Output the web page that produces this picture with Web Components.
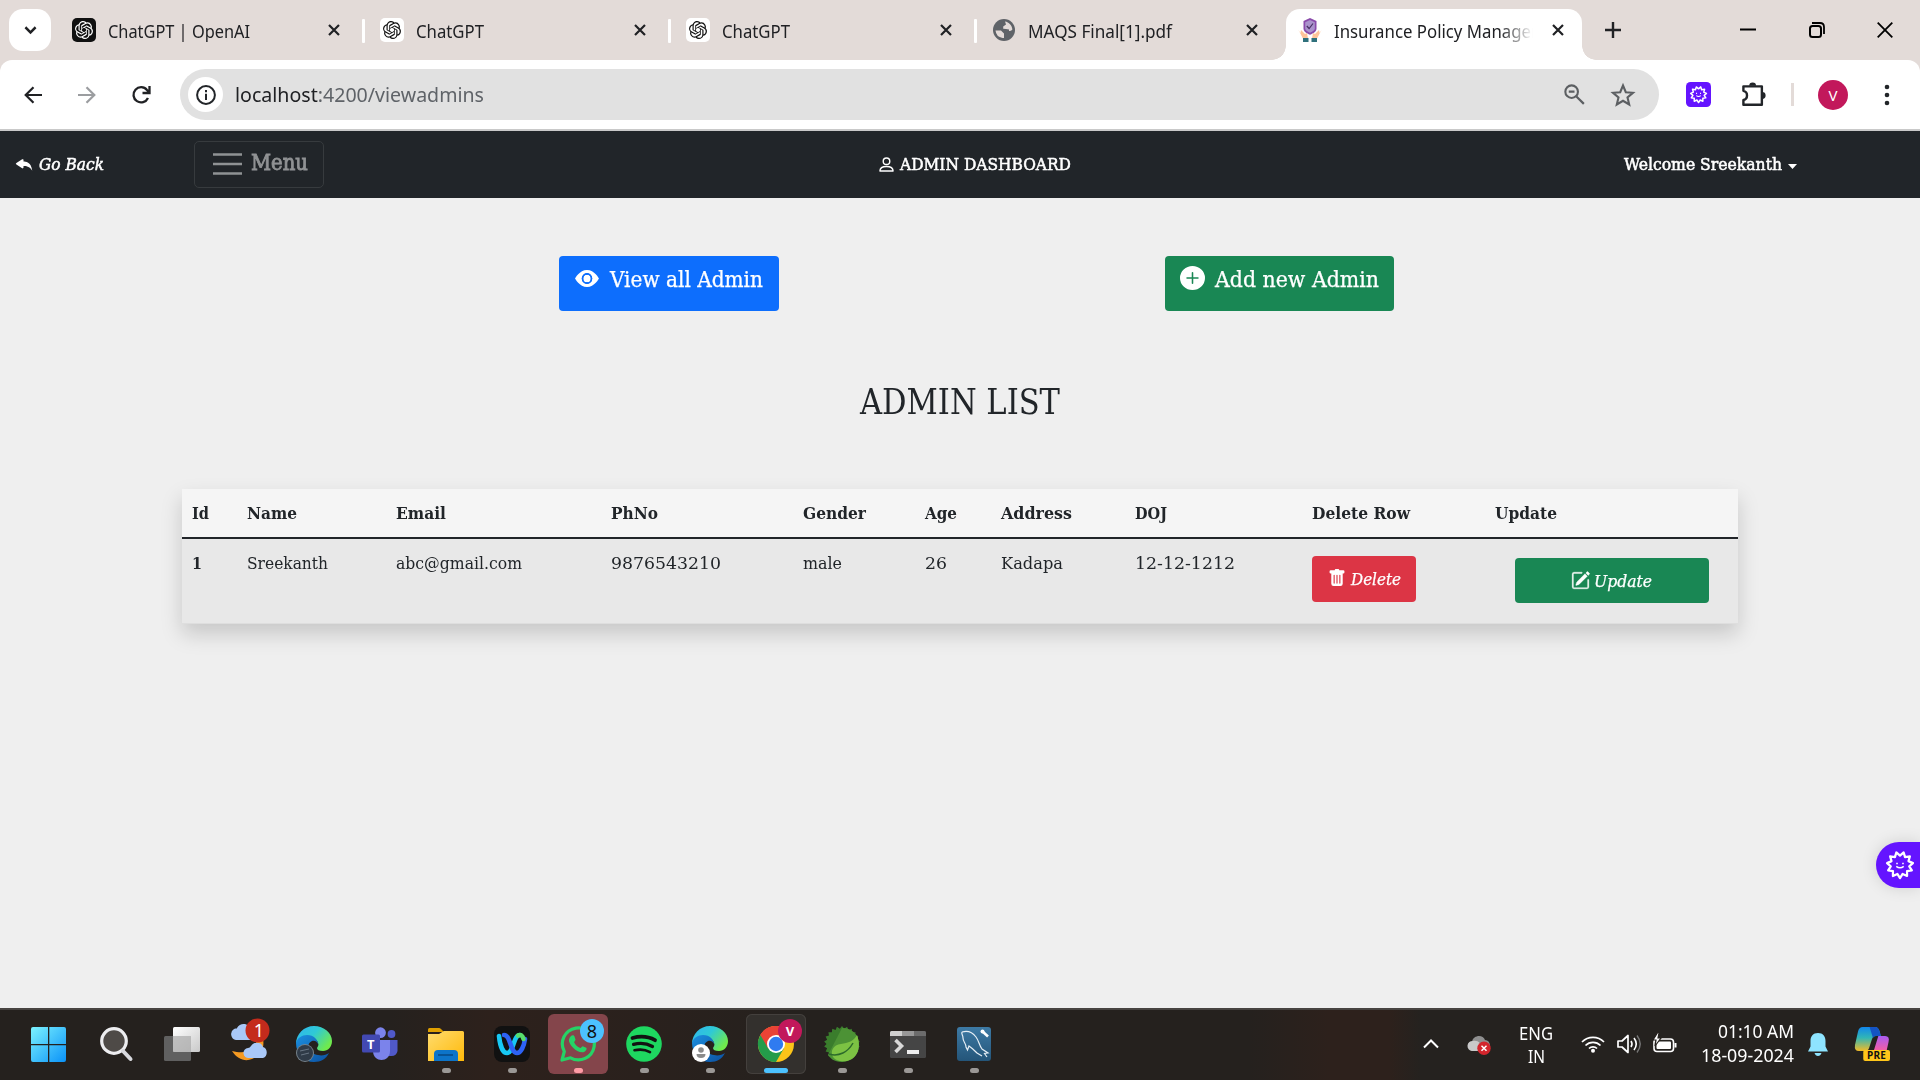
<!DOCTYPE html>
<html lang="en">
<head>
<meta charset="utf-8">
<title>Insurance Policy Management</title>
<style>
html,body{margin:0;height:100%;overflow:hidden}
body{width:1920px;height:1080px;background:#efefef}
</style>
</head>
<body>
<desktop-screen></desktop-screen>
<script>
const star = (cx, cy, ro, ri, n) => {
  let d = '';
  for (let i = 0; i < n * 2; i++) {
    const r = i % 2 ? ri : ro, a = Math.PI * (i / n + 0.5);
    d += (i ? 'L' : 'M') + (cx + r * Math.cos(a)).toFixed(2) + ' ' + (cy + r * Math.sin(a)).toFixed(2);
  }
  return d + 'Z';
};
const OPENAI = 'M22.2819 9.8211a5.9847 5.9847 0 0 0-.5157-4.9108 6.0462 6.0462 0 0 0-6.5098-2.9A6.0651 6.0651 0 0 0 4.9807 4.1818a5.9847 5.9847 0 0 0-3.9977 2.9 6.0462 6.0462 0 0 0 .7427 7.0966 5.98 5.98 0 0 0 .511 4.9107 6.051 6.051 0 0 0 6.5146 2.9001A5.9847 5.9847 0 0 0 13.2599 24a6.0557 6.0557 0 0 0 5.7718-4.2058 5.9894 5.9894 0 0 0 3.9977-2.9001 6.0557 6.0557 0 0 0-.7475-7.0729zm-9.022 12.6081a4.4755 4.4755 0 0 1-2.8764-1.0408l.1419-.0804 4.7783-2.7582a.7948.7948 0 0 0 .3927-.6813v-6.7369l2.02 1.1686a.071.071 0 0 1 .038.052v5.5826a4.504 4.504 0 0 1-4.4945 4.4944zm-9.6607-4.1254a4.4708 4.4708 0 0 1-.5346-3.0137l.142.0852 4.783 2.7582a.7712.7712 0 0 0 .7806 0l5.8428-3.3685v2.3324a.0804.0804 0 0 1-.0332.0615L9.74 19.9502a4.4992 4.4992 0 0 1-6.1408-1.6464zM2.3408 7.8956a4.485 4.485 0 0 1 2.3655-1.9728V11.6a.7664.7664 0 0 0 .3879.6765l5.8144 3.3543-2.0201 1.1685a.0757.0757 0 0 1-.071 0l-4.8303-2.7865A4.504 4.504 0 0 1 2.3408 7.872zm16.5963 3.8558L13.1038 8.364 15.1192 7.2a.0757.0757 0 0 1 .071 0l4.8303 2.7913a4.4944 4.4944 0 0 1-.6765 8.1042v-5.6772a.79.79 0 0 0-.407-.667zm2.0107-3.0231l-.142-.0852-4.7735-2.7818a.7759.7759 0 0 0-.7854 0L9.409 9.2297V6.8974a.0662.0662 0 0 1 .0284-.0615l4.8303-2.7866a4.4992 4.4992 0 0 1 6.6802 4.66zM8.3065 12.863l-2.02-1.1638a.0804.0804 0 0 1-.038-.0567V6.0742a4.4992 4.4992 0 0 1 7.3757-3.4537l-.142.0805L8.704 5.459a.7948.7948 0 0 0-.3927.6813zm1.0976-2.3654l2.602-1.4998 2.6069 1.4998v2.9994l-2.5974 1.4997-2.6067-1.4997Z';
const GEAR = star(15, 15, 14, 10, 11);
const EDGE = `<defs><linearGradient id="a" x1="0" y1="0" x2="1" y2=".6"><stop offset="0" stop-color="#2fb4f0"/><stop offset=".5" stop-color="#2fc9d6"/><stop offset="1" stop-color="#70ea4c"/></linearGradient><linearGradient id="b" x1="0" y1="0" x2="1" y2="1"><stop offset="0" stop-color="#1b8fe0"/><stop offset="1" stop-color="#0c50a0"/></linearGradient></defs>
<path d="M0 18C0 8 8 0 18 0s18 7 18 15c0 6-4 10-9 10-4 0-6-1-6-3 1-2 2-3 1-5-1-4-5-6-9-6C7 11 2 14 0 18z" fill="url(#a)"/><path d="M0 17c1-5 6-8 11-8 7 0 11 5 11 9-1-3-4-4-6-3-7 3-3 13 6 14 4 1 8 0 11-2-3 6-8 9-15 9C8 36 0 28 0 17z" fill="url(#b)"/>`;
const ICONS = {
  chevron: ['0 0 14 8', '<path d="M1.5 1.3 7 6.5l5.500-5.200" stroke="currentColor" stroke-width="2.600" fill="none"/>'],
  close: ['0 0 12 12', '<path d="M1 1l10 10M11 1 1 11" stroke="currentColor" stroke-width="2.200"/>'],
  plus: ['0 0 16 16', '<path d="M8 0v16M0 8h16" stroke="currentColor" stroke-width="2.400"/>'],
  min: ['0 0 16 16', '<path d="M0 7.500h16" stroke="#000" stroke-width="2"/>'],
  restore: ['0 0 16 16', '<path d="M3 1h8q4 0 4 4v7" stroke="#000" stroke-width="1.800" fill="none"/><rect x="1" y="4" width="11" height="11" rx="2.500" fill="none" stroke="#000" stroke-width="2"/>'],
  winclose: ['0 0 16 16', '<path d="M.7.7l14.600 14.600M15.300.7.7 15.300" stroke="#000" stroke-width="1.800"/>'],
  openaiDark: ['0 0 24 24', `<rect width="24" height="24" rx="5" fill="#101010"/><path transform="translate(3 3) scale(.75)" d="${OPENAI}" fill="#fff"/>`],
  openai: ['0 0 24 24', `<rect width="24" height="24" rx="5" fill="#fff"/><path transform="translate(3 3) scale(.75)" d="${OPENAI}" fill="#111"/>`],
  globe: ['0 0 22 22', '<circle cx="11" cy="11" r="11" fill="#5f6368"/><path d="M2.500 11.500h5.500l3 3v4.500h-1.500A8.500 8.500 0 0 1 2.500 11.500zM12 2.600c4 .6 7 4 7.400 7.900-.8 1.500-2.400 1.500-3.400 1.500v-1.500l-3-.5-2.800-.3V7.500l2.800-2z" fill="#e3dbd8"/>'],
  insurance: ['0 0 24 24', '<path d="M12 0l6.500 3v7.500c0 3-3 4.700-6.500 6.300-3.500-1.600-6.500-3.300-6.500-6.300V3z" fill="#8a4bab"/><path d="M12 2l4.800 2.200v6c0 2-2 3.300-4.800 4.600-2.800-1.300-4.800-2.600-4.800-4.600v-6z" fill="#aa93cc"/><path d="M8.800 8l2.300 2.500L15 5.500" fill="none" stroke="#473064" stroke-width="1.200"/><path d="M.2 11.500 2.500 15l.5-3 4 4 2-1 1 5.500H5zM23.800 11.500 21.500 15l-.5-3-4 4-2-1-1 5.500h5z" fill="#ffc49a"/><path d="M5 20h5.500v4H5zM13.500 20H19v4h-5.500z" fill="#2f717c"/>'],
  back: ['0 0 18 18', '<path d="M9.500 1.200 1.700 9l7.800 7.800M1.700 9H18" fill="none" stroke="currentColor" stroke-width="2.200"/>'],
  reload: ['0 0 20 20', '<path d="M17 13a7.600 7.600 0 1 1-1-8l2 2.300M18.500 1v7h-7" fill="none" stroke="currentColor" stroke-width="2.300"/>'],
  info: ['0 0 20 20', '<circle cx="10" cy="10" r="8.900" fill="none" stroke="#222529" stroke-width="2"/><path d="M9 8.800h2V15H9zM9 5h2v2.200H9z" fill="#222529"/>'],
  zoomout: ['0 0 22 22', '<circle cx="8" cy="8" r="6.600" fill="none" stroke="#5c5f62" stroke-width="2.200"/><path d="M5 8h6M13 13l7.800 7.800" stroke="#5c5f62" stroke-width="2.300"/>'],
  star: ['0 0 24 24', '<path d="M12 2.500l2.800 6.700 7.200.6-5.500 4.700 1.700 7L12 17.800l-6.200 3.700 1.700-7L2 9.800l7.200-.6z" fill="none" stroke="#5c5f62" stroke-width="2.100"/>'],
  ext: ['0 0 25 25', `<rect width="25" height="25" rx="4.500" fill="#6414ff"/><g transform="translate(4 4) scale(.57)"><path d="${GEAR}" fill="none" stroke="#fff" stroke-width="2.600" stroke-linejoin="round"/><path d="M11.500 12v2m7-2v2m-7.500 3q4 3 8 0" fill="none" stroke="#fff" stroke-width="1.800"/></g>`],
  puzzle: ['0 0 26 26', '<path d="M2.500 4.500h19.200v19.200H2.500v-5c5-1 5-8.500 0-9.500z" fill="none" stroke="#222529" stroke-width="2.500" stroke-linejoin="round"/><path d="M8.500 4a3.600 3.600 0 0 1 7.200 0zM22 10.500a3.600 3.600 0 0 1 0 7.200z" fill="#222529"/>'],
  dots: ['0 0 6 22', '<circle cx="3" cy="3" r="2.300" fill="#222529"/><circle cx="3" cy="11" r="2.300" fill="#222529"/><circle cx="3" cy="19" r="2.300" fill="#222529"/>'],
  reply: ['0 2.300 16 11', '<path d="M5.921 11.900 1.353 8.620a.719.719 0 0 1 0-1.238L5.921 4.100A.716.716 0 0 1 7 4.719V6c1.500 0 6 0 7 8-2.500-4.500-7-4-7-4v1.281c0 .56-.606.898-1.079.62z" fill="#fff" transform="translate(-1.200 -1.700) scale(1.180 1.050)"/>'],
  burger: ['0 0 28 24', '<path d="M0 2.500h28M0 12h28M0 21.500h28" stroke="#8f9294" stroke-width="2.400"/>'],
  person: ['0 0 16 16', '<circle cx="8" cy="4.500" r="3.500" fill="none" stroke="#fff" stroke-width="1.500"/><path d="M1 15c0-3 3-4.800 7-4.800s7 1.800 7 4.800z" fill="none" stroke="#fff" stroke-width="1.500" stroke-linejoin="round"/>'],
  caret: ['0 0 10 5', '<path d="M0 0h10L5 5z" fill="#fff"/>'],
  eye: ['0 2.500 16 11', '<path d="M10.500 8a2.500 2.500 0 1 1-5 0 2.500 2.500 0 0 1 5 0z" fill="#fff"/><path d="M0 8s3-5.500 8-5.500S16 8 16 8s-3 5.500-8 5.500S0 8 0 8zm8 3.500a3.500 3.500 0 1 0 0-7 3.500 3.500 0 0 0 0 7z" fill="#fff" fill-rule="evenodd"/><circle cx="8" cy="8" r="3" fill="none" stroke="#0d6efd" stroke-width="1"/>'],
  pluscircle: ['0 0 16 16', '<path d="M16 8A8 8 0 1 1 0 8a8 8 0 0 1 16 0zM8.500 4.500a.5.5 0 0 0-1 0v3h-3a.5.5 0 0 0 0 1h3v3a.5.5 0 0 0 1 0v-3h3a.5.5 0 0 0 0-1h-3v-3z" fill="#fff"/>'],
  trash: ['1 0 14 16', '<path d="M2.500 1a1 1 0 0 0-1 1v1a1 1 0 0 0 1 1H3v9a2 2 0 0 0 2 2h6a2 2 0 0 0 2-2V4h.5a1 1 0 0 0 1-1V2a1 1 0 0 0-1-1H10a1 1 0 0 0-1-1H7a1 1 0 0 0-1 1H2.500zm3 4a.5.5 0 0 1 .5.5v7a.5.5 0 0 1-1 0v-7a.5.5 0 0 1 .5-.5zM8 5a.5.5 0 0 1 .5.5v7a.5.5 0 0 1-1 0v-7A.5.5 0 0 1 8 5zm3 .5v7a.5.5 0 0 1-1 0v-7a.5.5 0 0 1 1 0z" fill="#fff"/>'],
  pencil: ['0 0 16 16', '<path d="M15.502 1.940a.5.5 0 0 1 0 .706L14.459 3.690l-2-2L13.502.646a.5.5 0 0 1 .707 0l1.293 1.293zm-1.750 2.456-2-2L4.939 9.210a.5.5 0 0 0-.121.196l-.805 2.414a.25.25 0 0 0 .316.316l2.414-.805a.5.5 0 0 0 .196-.12l6.813-6.814z" fill="#fff" stroke="#fff" stroke-width=".3"/><path d="M1 13.500A1.500 1.500 0 0 0 2.500 15h11a1.500 1.500 0 0 0 1.500-1.500v-6a.5.5 0 0 0-1 0v6a.5.5 0 0 1-.5.5h-11a.5.5 0 0 1-.5-.5v-11a.5.5 0 0 1 .5-.5H9a.5.5 0 0 0 0-1H2.500A1.500 1.500 0 0 0 1 2.500v11z" fill="#fff" stroke="#fff" stroke-width=".3"/>'],
  gear: ['0 0 30 30', `<path d="${GEAR}" fill="none" stroke="#fff" stroke-width="2.400" stroke-linejoin="round"/><path d="M11.800 12.500v1.600m6.400-1.600v1.600m-7.200 2.400q4 3 8 0" fill="none" stroke="#fff" stroke-width="1.700"/>`],
  windows: ['0 0 35 35', '<defs><linearGradient id="w" gradientUnits="userSpaceOnUse" x1="0" y1="0" x2="35" y2="35"><stop offset="0" stop-color="#7cf3ff"/><stop offset="1" stop-color="#0a92f8"/></linearGradient></defs><path d="M2 0h15v17H0V2q0-2 2-2zM18.300 0H33q2 0 2 2v15H18.300zM0 18.300h17V35H2q-2 0-2-2zM18.300 18.300H35V33q0 2-2 2H18.300z" fill="url(#w)"/>'],
  search: ['0 0 33 35', '<circle cx="14" cy="14" r="12.300" fill="#4e4a47" stroke="#ededf0" stroke-width="3.200"/><path d="M23 24l7.500 8" stroke="#d8d9de" stroke-width="4" stroke-linecap="round"/>'],
  taskview: ['0 0 36 34', '<defs><linearGradient id="t" x1="0" y1="0" x2="1" y2="1"><stop offset="0" stop-color="#fff"/><stop offset="1" stop-color="#c9c9c9"/></linearGradient></defs><rect y="9" width="27" height="25" rx="1.500" fill="#606060"/><rect x="9" width="27" height="25" rx="1.500" fill="url(#t)"/><path d="M9 9h18v16H9z" fill="#aaa" opacity=".7"/>'],
  weather: ['0 0 42 44', '<path d="M27 21c2 9-9 15-24 11 5 8 13 11 20 8 8-3 13-10 11-20z" fill="#f59a22"/><path d="M7 21a6 6 0 0 1-2-11c2-1 3 0 3-1 3-6 12-5 13 1 6 1 7 10 1 11zM20 39a5 5 0 0 1-1-10c3-1 2-1 3-2 3-5 11-4 12 1 5 1 5 10 0 11z" fill="#a9c8f8"/><circle cx="28.500" cy="11.500" r="12" fill="#c42b1c"/>', '1'],
  edge: ['0 0 36 36', EDGE + '<circle cx="9" cy="27" r="9" fill="#75818b"/><circle cx="9" cy="27" r="8" fill="#303b48"/><path d="M4 25l9-2M5 29l8-2" stroke="#697684" stroke-width="1"/>'],
  edge2: ['0 0 36 36', EDGE + '<circle cx="9" cy="27" r="9" fill="#fff"/><circle cx="9" cy="24" r="2.800" fill="#8b8b8b"/><path d="M4.500 28h9q0 4-4.500 4t-4.500-4z" fill="#8b8b8b"/>'],
  teams: ['0 0 36 34', '<circle cx="29.500" cy="7" r="3.900" fill="#5059c9"/><path d="M26 13h9.500v11q-1 5-6 5h-4z" fill="#5059c9"/><circle cx="18.500" cy="5.700" r="5.400" fill="#7b83eb"/><path d="M11 13h17v11c0 12-17 12-17 0z" fill="#7b83eb"/><rect y="7.500" width="18" height="18" rx="1.500" fill="#4249b2"/>'],
  folder: ['0 0 36 33', '<defs><linearGradient id="f" x1="0" y1="0" x2="1" y2="1"><stop offset="0" stop-color="#ffdc6e"/><stop offset="1" stop-color="#ffb90a"/></linearGradient></defs><path d="M0 1.500Q0 0 1.500 0H11q1 0 2 1l3 3H0z" fill="#e0a000"/><path d="M0 6h11l5-3h18.500Q36 3 36 4.500V33H0z" fill="url(#f)"/><path d="M6 33v-7q0-4 4-4h16q4 0 4 4v7z" fill="#0d74c9"/><path d="M10 27h15" stroke="#084b88" stroke-width="1.600"/>'],
  webex: ['0 0 36 36', '<rect width="36" height="36" rx="8" fill="#111"/><path d="M5 10c1 10 4 17 8 17 7 0 6-18 13-18" fill="none" stroke="#17c8f4" stroke-width="4.600" stroke-linecap="round"/><path d="M10 9c7 0 6 18 13 18 4 0 7-7 8-14" fill="none" stroke="#2d62f5" stroke-width="4.600" stroke-linecap="round"/><path d="M24 9.500q4-2 5.500 3.500" fill="none" stroke="#57dd6b" stroke-width="4.600" stroke-linecap="round"/>'],
  whatsapp: ['0 0 36 36', '<path d="M2 34l2.300-8.500A16 16 0 1 1 10.500 31.800z" fill="none" stroke="#25d366" stroke-width="3.200" stroke-linejoin="round"/><path d="M11 10c1-1 3-1 3.500.5l1 3c.2 1-1.500 2-1.300 3 1.300 2.800 3 4.300 6 5.500 1 .3 2-2 3-1.600l3 1.400c1 .5 0 3.700-2.700 4.400C17 27.500 8 18 9 13.500q.5-2.500 2-3.500z" fill="#25d366"/>'],
  spotify: ['0 0 36 36', '<circle cx="18" cy="18" r="17.800" fill="#1ed760"/><path d="M6.500 12c8-2.200 16-1.500 22.500 2.200" stroke="#121212" stroke-width="3.800" fill="none" stroke-linecap="round"/><path d="M7.500 18.400c7-1.900 13.500-1 19 2.100" stroke="#121212" stroke-width="3.200" fill="none" stroke-linecap="round"/><path d="M8.500 24.300c6-1.400 11-.7 15.500 1.900" stroke="#121212" stroke-width="2.600" fill="none" stroke-linecap="round"/>'],
  chrome: ['0 0 36 36', '<circle cx="18" cy="18" r="18" fill="#fcc419"/><path d="M18 18 2.400 9A18 18 0 0 1 33.600 9H18z" fill="#ea4335"/><path d="M2.400 9A18 18 0 0 0 18 36l7.800-13.500L18 18z" fill="#249c4a"/><path d="M2.400 9 10.200 22.500 18 18V9h15.600A18 18 0 0 0 2.400 9z" fill="#ea4335"/><circle cx="18" cy="18" r="9" fill="#fff"/><circle cx="18" cy="18" r="7.200" fill="#2f7bf0"/>'],
  spring: ['0 0 36 36', `<path d="${star(18, 18, 18, 15.5, 22)}" fill="#3a7d2c"/><path d="M18 2a16 16 0 0 1 17 16 17 17 0 0 1-17 18C10 36 6 32 4 29z" fill="#4c9235"/><path d="M33 9c4 11 2 23-10 26-6 1-11 0-14-4-3-6 0-12 8-13 7-1 13-3 16-9z" fill="#7cc243"/><path d="M5 28c10 3 19-2 24-11" fill="none" stroke="#2c6b2b" stroke-width="1.500"/>`],
  terminal: ['0 0 36 27', '<rect width="36" height="27" rx="1.500" fill="#454545"/><path d="M0 1.500Q0 0 1.500 0H12v5H0z" fill="#d0d0d0"/><path d="M12 0h12v5H12z" fill="#989898"/><path d="M24 0h10.500Q36 0 36 1.500V5H24z" fill="#6c6c6c"/><path d="M5.500 9l6 6-6 6" fill="none" stroke="#d9d9d9" stroke-width="3.600"/><path d="M17 19h12v4H17z" fill="#eee"/>'],
  mysql: ['0 0 34 34', '<defs><linearGradient id="m" x1="0" y1="0" x2="0" y2="1"><stop offset="0" stop-color="#3d7aa5"/><stop offset="1" stop-color="#245579"/></linearGradient></defs><rect width="34" height="34" rx="3" fill="url(#m)"/><path d="M5 5c6-2 11 1 14 5 3 4 3 8 6 12l6 4-3.500.5L30 30M5 5c-1 2 1 3 1 6 0 4 3 5 3 9l1.500 3 1.500-4c3 2 5 4 8 7l5 3" fill="none" stroke="#e5eef5" stroke-width="1.200"/><path d="M25 4l6 5.500" stroke="#fff" stroke-width="2.600"/><circle cx="25.500" cy="4.500" r="2" fill="#fff"/>'],
  up: ['0 0 16 10', '<path d="M1 8.500 8 1.500l7 7" fill="none" stroke="#fff" stroke-width="2"/>'],
  cloudx: ['0 0 24 20', '<path d="M5 16a5 5 0 0 1 0-9c1-7 11-8 13-2 6 0 7 10 1 11z" fill="#8f8f8f"/><path d="M5 16a5 5 0 1 1 1-10c5-1 8 2 11 10z" fill="#c9c9c9"/><circle cx="17" cy="13.300" r="6.700" fill="#d3252c"/><path d="M14.500 10.800l5 5m0-5-5 5" stroke="#fff" stroke-width="1.500"/>'],
  wifi: ['0 0 24 18', '<path d="M1 7a15.500 15.500 0 0 1 22 0M4.500 10.500a10.500 10.500 0 0 1 15 0M8 13.500a5.700 5.700 0 0 1 8 0" fill="none" stroke="#fff" stroke-width="1.700"/><circle cx="12" cy="15.700" r="2" fill="#fff"/>'],
  volume: ['0 0 24 20', '<path d="M1 7h4l6-5.500v17L5 13H1z" fill="none" stroke="#fff" stroke-width="1.700" stroke-linejoin="round"/><path d="M14 7q2 3 0 6M17 4q4.500 6 0 12" fill="none" stroke="#fff" stroke-width="1.600"/><path d="M20 1.500q6.500 8.500 0 17" fill="none" stroke="#777" stroke-width="1.400"/>'],
  battery: ['0 0 24 20', '<rect x="1" y="6" width="19.500" height="12.500" rx="3" fill="none" stroke="#fff" stroke-width="1.600"/><rect x="3.500" y="8.500" width="14.500" height="7.500" rx="1" fill="#fff"/><path d="M21.500 10h2v4.500h-2z" fill="#fff"/><path d="M5-1 0 7h3l-1 6 6-8H5l1-5z" fill="#fff" stroke="#25211d" stroke-width="1.200"/>'],
  bell: ['0 0 20 23', '<path d="M10 0c5 0 7.500 3.500 7.500 8v5.500l2.500 5H0l2.500-5V8C2.500 3.500 5 0 10 0zM6.500 20h7q-1 3-3.500 3t-3.500-3z" fill="#8ee4ff"/>'],
  copilot: ['0 0 36 34', '<defs><linearGradient id="c" x1="0" y1="0" x2="0" y2="1"><stop offset="0" stop-color="#1287ec"/><stop offset=".45" stop-color="#31b6b5"/><stop offset="1" stop-color="#f3bb26"/></linearGradient><linearGradient id="d" x1="0" y1="0" x2="0" y2="1"><stop offset="0" stop-color="#a95cf3"/><stop offset=".6" stop-color="#ee5eaa"/><stop offset="1" stop-color="#f79a54"/></linearGradient></defs><path d="M8 0h13q3 0 4.500 5l1 4h-5q-3 0-4 3l-3 9q-1 3-4 3H4q-5 0-4-6L3 5q1-5 5-5z" fill="url(#c)"/><path d="M15 0h6q3 0 4.500 5l1 4h-5q-2 0-3 2z" fill="#1554c4"/><path d="M24 9h7q5 0 3.500 6L32 26q-1 5-5 5H17z" fill="url(#d)"/><rect x="8.500" y="23" width="27.500" height="11" rx="2" fill="#ffc61a"/>']
};

const define = (name, css, html, after) => customElements.define(name, class extends HTMLElement {
  constructor() {
    super();
    this.attachShadow({ mode: 'open' }).innerHTML = `<style>${css}</style>${html}`;
  }
  connectedCallback() { if (after) after.call(this, this.shadowRoot); }
});

/* Text set to a given advance width */
define('fit-text', ':host{display:block;flex:none;white-space:nowrap}span{display:inline-block;transform-origin:0 50%}', '<span><slot></slot></span>', function (root) {
  const w = +this.getAttribute('w'), s = root.querySelector('span');
  this.style.width = w + 'px';
  const n = s.getBoundingClientRect().width;
  if (n) s.style.transform = `scaleX(${w / n})`;
});
/* Icon: name, width, height */
define('ui-icon', ':host{display:block;flex:none}svg{display:block;width:100%;height:100%;overflow:visible}', '<svg preserveAspectRatio="none"></svg>', function (root) {
  const [vb, body] = ICONS[this.getAttribute('name')], s = root.querySelector('svg');
  s.setAttribute('viewBox', vb); s.innerHTML = body;
  this.style.width = this.getAttribute('w') + 'px';
  this.style.height = this.getAttribute('h') + 'px';
});
define('browser-tab', `
:host{display:grid;grid-template-columns:24px 12px 199px var(--gap,19px) 12px;align-items:center;height:60px;width:292px;flex:none;color:#202124;font:18.500px/24px "Noto Sans","Open Sans",sans-serif;padding-left:12px;box-sizing:border-box}
.c{grid-column:5}
:host([active]){background:#fff;height:51px;margin-top:9px;border-radius:14px 14px 0 0;width:296px;padding-bottom:9px;position:relative}
:host([active]) .m{-webkit-mask:linear-gradient(90deg,#000 83%,transparent 100%);overflow:hidden}
:host([active])::before,:host([active])::after{content:"";position:absolute;bottom:0;width:14px;height:14px}
:host([active])::before{left:-14px;background:radial-gradient(circle at 0 0,transparent 13.500px,#fff 14px)}
:host([active])::after{right:-14px;background:radial-gradient(circle at 100% 0,transparent 13.500px,#fff 14px)}
.m{grid-column:3;padding-top:1px}`,
'<slot name="icon"></slot><div class="m"><slot></slot></div><ui-icon class="c" name="close" w="12" h="12"></ui-icon>');
define('tab-strip', `
:host{display:flex;height:60px;background:#e3dbd8;color:#202124}
.d{width:42px;height:42px;border-radius:14px;background:#fff;margin:9px 9px 0;display:grid;place-items:center}
.s{width:3px;height:24px;background:#fff;margin:19px 3px 0 8px;border-radius:1px;flex:none}
.w{display:flex;align-items:center}`,
`<div class="d"><ui-icon name="chevron" w="13" h="8"></ui-icon></div>
<browser-tab style="width:294px;--gap:21px"><ui-icon slot="icon" name="openaiDark" w="24" h="24"></ui-icon><fit-text w="142">ChatGPT | OpenAI</fit-text></browser-tab>
<div class="s"></div><browser-tab><ui-icon slot="icon" name="openai" w="24" h="24"></ui-icon><fit-text w="68">ChatGPT</fit-text></browser-tab>
<div class="s"></div><browser-tab><ui-icon slot="icon" name="openai" w="24" h="24"></ui-icon><fit-text w="68">ChatGPT</fit-text></browser-tab>
<div class="s"></div><browser-tab><ui-icon slot="icon" name="globe" w="22" h="22" style="margin-left:1px"></ui-icon><fit-text w="144">MAQS Final[1].pdf</fit-text></browser-tab>
<browser-tab active style="margin-left:14px"><ui-icon slot="icon" name="insurance" w="24" h="24"></ui-icon><fit-text w="204">Insurance Policy Manager</fit-text></browser-tab>
<div class="w"><ui-icon name="plus" w="16" h="16" style="margin-left:23px"></ui-icon><ui-icon name="min" w="16" h="16" style="margin-left:119px"></ui-icon><ui-icon name="restore" w="16" h="16" style="margin-left:53px"></ui-icon><ui-icon name="winclose" w="16" h="16" style="margin-left:52px"></ui-icon></div>`);
define('tool-bar', `
:host{display:block;background:#e3dbd8;border-bottom:2px solid #c9c9c9}
.r{display:flex;align-items:center;height:69px;background:#fff;border-radius:12px 12px 0 0;color:#202124}
.o{display:flex;align-items:center;width:1479px;height:51px;border-radius:26px;background:#e1e1e1;margin-left:29px;font:20.500px/28px "Noto Sans","Open Sans",sans-serif}
.o fit-text{margin-top:-2px}
.i{width:35px;height:35px;border-radius:50%;background:#fff;margin:0 12px 0 8px;display:grid;place-items:center}
.o span{color:#5f6368}
.v{width:30px;height:30px;border-radius:50%;background:#c2185b;color:#fff;font:15px/30px "Noto Sans",sans-serif;text-align:center;margin-left:24px}`,
`<div class="r"><ui-icon name="back" w="18" h="18" style="margin-left:24px"></ui-icon><ui-icon name="back" w="18" h="18" style="margin-left:36px;transform:scaleX(-1);color:#9b9da0"></ui-icon><ui-icon name="reload" w="20" h="20" style="margin-left:35px"></ui-icon>
<div class="o"><div class="i"><ui-icon name="info" w="20" h="20"></ui-icon></div><fit-text w="249">localhost<span>:4200/viewadmins</span></fit-text><ui-icon name="zoomout" w="21" h="21" style="margin-left:1080px"></ui-icon><ui-icon name="star" w="24" h="24" style="margin-left:26px"></ui-icon></div>
<ui-icon name="ext" w="25" h="25" style="margin-left:27px"></ui-icon><ui-icon name="puzzle" w="25" h="25" style="margin-left:30px"></ui-icon><div style="width:3px;height:23px;background:#e3dbd8;margin-left:25px"></div><div class="v">V</div><ui-icon name="dots" w="6" h="22" style="margin-left:36px"></ui-icon></div>`);
define('nav-bar', `
:host{display:flex;align-items:center;height:67px;background:#212529;color:#fff;font:17px/24px "DejaVu Serif Condensed","DejaVu Serif",serif}
fit-text{-webkit-text-stroke:.5px currentColor;margin-top:-1px}
.m{display:flex;align-items:center;box-sizing:border-box;width:130px;height:47px;border:1px solid #373b3e;border-radius:5px;margin:-1px 0 0 90px;padding-left:18px;color:#909294;font-size:21.500px}.m fit-text{-webkit-text-stroke:.8px currentColor}`,
`<ui-icon name="reply" w="17" h="12" style="margin-left:16px"></ui-icon><fit-text w="65" style="margin-left:6px;font-style:italic">Go Back</fit-text>
<div class="m"><ui-icon name="burger" w="29" h="24"></ui-icon><fit-text w="57" style="margin:-2px 0 0 9px">Menu</fit-text></div>
<ui-icon name="person" w="15" h="15" style="margin-left:555px"></ui-icon><fit-text w="171" style="margin-left:6px">ADMIN DASHBOARD</fit-text>
<fit-text w="158" style="margin-left:553px">Welcome Sreekanth</fit-text><ui-icon name="caret" w="9" h="5" style="margin:4px 0 0 6px"></ui-icon>`);
define('action-button', `
:host{display:flex;box-sizing:border-box;border-radius:4px;color:#fff;font-family:"DejaVu Serif Condensed","DejaVu Serif",serif}`, '<slot></slot>');
define('admin-table', `
:host{display:block;width:1556px;margin:66px 0 0 182px;color:#212529;font:16.500px/24px "DejaVu Serif Condensed","DejaVu Serif",serif;box-shadow:0 10px 20px rgba(0,0,0,.17)}
.row{display:grid;grid-template-columns:55px 149px 215px 192px 122px 76px 134px 177px 183px 1fr;padding-left:10px}
.h{height:48px;background:#f5f5f5;border-bottom:2px solid #212529;align-items:center;font-weight:bold}
.h fit-text{padding-top:2px}
.b{height:84px;background:#e8e8e8;border-bottom:1px solid #dedede}
.b>fit-text{margin-top:13px}
.b action-button fit-text{-webkit-text-stroke:.25px currentColor}`,
`<div class="row h"><fit-text w="17">Id</fit-text><fit-text w="50">Name</fit-text><fit-text w="50">Email</fit-text><fit-text w="47">PhNo</fit-text><fit-text w="63">Gender</fit-text><fit-text w="32">Age</fit-text><fit-text w="71">Address</fit-text><fit-text w="32">DOJ</fit-text><fit-text w="98">Delete Row</fit-text><fit-text w="62">Update</fit-text></div>
<div class="row b"><fit-text w="10" style="font-weight:bold">1</fit-text><fit-text w="81">Sreekanth</fit-text><fit-text w="126">abc@gmail.com</fit-text><fit-text w="110">9876543210</fit-text><fit-text w="39">male</fit-text><fit-text w="22">26</fit-text><fit-text w="62">Kadapa</fit-text><fit-text w="100">12-12-1212</fit-text>
<action-button style="width:104px;height:46px;background:#dc3545;margin-top:17px;padding:13px 0 0 17px"><ui-icon name="trash" w="16" h="18"></ui-icon><fit-text w="50" style="margin-left:6px;margin-top:-1px;font-style:italic">Delete</fit-text></action-button>
<action-button style="width:194px;height:45px;background:#198754;margin:19px 0 0 20px;padding:13px 0 0 56px"><ui-icon name="pencil" w="19" h="19"></ui-icon><fit-text w="58" style="margin-left:4px;margin-top:-1px;font-style:italic">Update</fit-text></action-button></div>`);
define('side-widget', `
:host{position:absolute;right:0;top:842px;width:44px;height:46px;box-sizing:border-box;border-radius:23px 0 0 23px;background:#6414ff;padding:9px 0 0 10px;box-shadow:0 0 16px rgba(0,0,0,.13)}`, '<ui-icon name="gear" w="28" h="28"></ui-icon>');
define('page-view', `
:host{display:block;height:810px;background:#efefef;color:#212529;font-family:"DejaVu Serif Condensed","DejaVu Serif",serif}
.a{display:flex;padding:58px 0 0 559px}
.a action-button{height:55px;font-size:21.500px;line-height:28px}
.a fit-text{-webkit-text-stroke:.25px currentColor}
h1{margin:70px 0 0 860px;font-size:35px;line-height:42px;font-weight:normal}`,
`<div class="a"><action-button style="width:220px;background:#0d6efd;padding:10px 0 0 16px"><ui-icon name="eye" w="24" h="17" style="margin-top:4px"></ui-icon><fit-text w="153" style="margin-left:11px">View all Admin</fit-text></action-button>
<action-button style="width:229px;background:#198754;margin-left:386px;padding:10px 0 0 15px"><ui-icon name="pluscircle" w="25" h="24"></ui-icon><fit-text w="164" style="margin-left:10px">Add new Admin</fit-text></action-button></div>
<h1><fit-text w="200">ADMIN LIST</fit-text></h1><admin-table></admin-table><side-widget></side-widget>`);
define('task-item', `
:host{display:grid;place-items:center;width:60px;height:60px;margin-right:6px;flex:none;position:relative;border-radius:6px;box-sizing:border-box}
:host([run])::after{content:"";position:absolute;bottom:1px;left:50%;width:9px;height:5px;margin-left:-4.500px;border-radius:3px;background:#9b9896}
:host([kind=alert]){background:#84454b}:host([kind=alert])::after{background:#ff9ba5!important}
:host([kind=active]){background:#33302d;box-shadow:inset 0 0 0 1px #44403d}:host([kind=active])::after{width:24px!important;margin-left:-12px!important;background:#4cc2ff!important}`, '<slot></slot>');
define('task-bar', `
:host{display:flex;height:72px;box-sizing:border-box;border-top:2px solid #484441;background:linear-gradient(90deg,#25211e 0,#25211e 390px,#2d211c 490px,#2a211d 640px,#25211e 800px,#25211e 1250px,#2d211c 1330px,#2d211c 1390px,#25221f 1420px,#25221f 100%);padding-left:18px;color:#fff;font:17.500px/24px "Noto Sans","Open Sans",sans-serif}
task-item{margin-top:4px}
b{position:absolute;right:4px;top:5px;width:24px;height:24px;border-radius:50%;text-align:center;font:18px/24px "Noto Sans",sans-serif}
.t{position:absolute;left:17px;top:22px;font:bold 13px/16px "Noto Sans",sans-serif;color:#fff}
.tray{display:flex;align-items:center;height:68px}
.p{position:relative}.p i{position:absolute;left:12px;top:23px;font:bold 10px/11px "Noto Sans",sans-serif;letter-spacing:.2px;color:#111}`,
`<task-item style="margin-right:8px"><ui-icon name="windows" w="35" h="35"></ui-icon></task-item>
<task-item><ui-icon name="search" w="33" h="35"></ui-icon></task-item>
<task-item><ui-icon name="taskview" w="36" h="34"></ui-icon></task-item>
<task-item><ui-icon name="weather" w="42" h="44" style="margin:-7px 0 0 4px"></ui-icon><b style="right:7px;top:4px">1</b></task-item>
<task-item><ui-icon name="edge" w="36" h="36"></ui-icon></task-item>
<task-item><ui-icon name="teams" w="36" h="34"></ui-icon><span class="t">T</span></task-item>
<task-item run><ui-icon name="folder" w="36" h="33"></ui-icon></task-item>
<task-item run><ui-icon name="webex" w="36" h="36"></ui-icon></task-item>
<task-item run kind="alert"><ui-icon name="whatsapp" w="36" h="36"></ui-icon><b style="background:#4cc2ff;color:#111">8</b></task-item>
<task-item run><ui-icon name="spotify" w="36" h="36"></ui-icon></task-item>
<task-item run><ui-icon name="edge2" w="36" h="36"></ui-icon></task-item>
<task-item run kind="active"><ui-icon name="chrome" w="36" h="36"></ui-icon><b style="background:#c2185b;font:bold 13px/24px 'Noto Sans'">V</b></task-item>
<task-item run><ui-icon name="spring" w="36" h="36"></ui-icon></task-item>
<task-item run><ui-icon name="terminal" w="36" h="27"></ui-icon></task-item>
<task-item run><ui-icon name="mysql" w="34" h="34"></ui-icon></task-item>
<div class="tray"><ui-icon name="up" w="16" h="10" style="margin-left:413px"></ui-icon><ui-icon name="cloudx" w="24" h="20" style="margin:2px 0 0 28px"></ui-icon>
<div style="margin-left:28px;width:34px;margin-top:1px"><fit-text w="34">ENG</fit-text><fit-text w="17" style="margin-left:9px;margin-top:-1px">IN</fit-text></div>
<ui-icon name="wifi" w="24" h="18" style="margin-left:28px"></ui-icon><ui-icon name="volume" w="24" h="20" style="margin-left:12px"></ui-icon><ui-icon name="battery" w="24" h="20" style="margin:-3px 0 0 12px"></ui-icon>
<div style="margin-left:24px;width:93px;margin-top:-2px"><fit-text w="76" style="margin-left:17px">01:10 AM</fit-text><fit-text w="93">18-09-2024</fit-text></div>
<ui-icon name="bell" w="20" h="23" style="margin-left:14px"></ui-icon><div class="p" style="margin-left:27px"><ui-icon name="copilot" w="35" h="34"></ui-icon><i>PRE</i></div></div>`);
define('desktop-screen', ':host{display:block;width:1920px;height:1080px;position:relative;overflow:hidden}', '<tab-strip></tab-strip><tool-bar></tool-bar><nav-bar></nav-bar><page-view></page-view><task-bar></task-bar>');
</script>
</body>
</html>
